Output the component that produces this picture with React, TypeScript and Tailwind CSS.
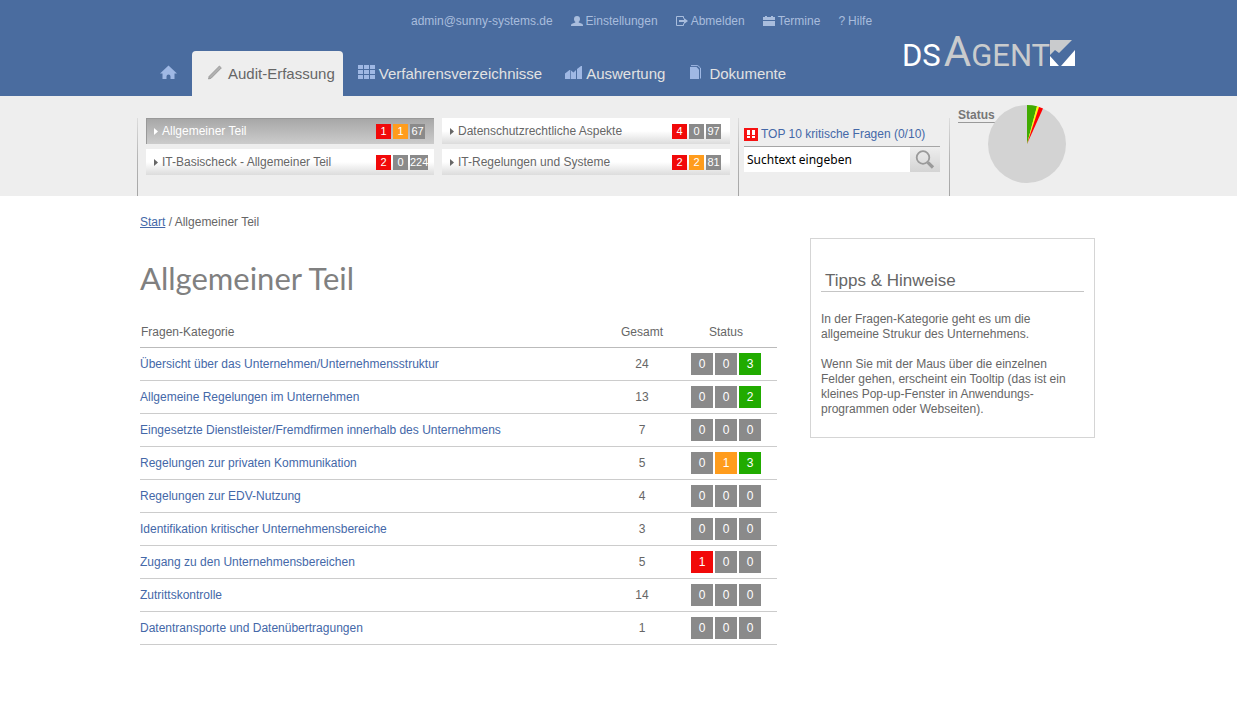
import type { ReactNode } from "react";

type Tone = "red" | "orange" | "green" | "gray";

const TONES: Record<Tone, string> = {
  red: "bg-[#f10909]",
  orange: "bg-[#ff9c1c]",
  green: "bg-[#21ab00]",
  gray: "bg-[#8a8a8a]",
};

/** Status columns run critical, warning, ok. A zero is always gray. */
const ORDER: Tone[] = ["red", "orange", "green"];

interface Section {
  label: string;
  counts: number[];
  active?: boolean;
}

const SECTIONS: Section[] = [
  { label: "Allgemeiner Teil", counts: [1, 1, 67], active: true },
  { label: "Datenschutzrechtliche Aspekte", counts: [4, 0, 97] },
  { label: "IT-Basischeck - Allgemeiner Teil", counts: [2, 0, 224] },
  { label: "IT-Regelungen und Systeme", counts: [2, 2, 81] },
];

const ROWS: { label: string; total: number; counts: number[] }[] = [
  { label: "Übersicht über das Unternehmen/Unternehmensstruktur", total: 24, counts: [0, 0, 3] },
  { label: "Allgemeine Regelungen im Unternehmen", total: 13, counts: [0, 0, 2] },
  { label: "Eingesetzte Dienstleister/Fremdfirmen innerhalb des Unternehmens", total: 7, counts: [0, 0, 0] },
  { label: "Regelungen zur privaten Kommunikation", total: 5, counts: [0, 1, 3] },
  { label: "Regelungen zur EDV-Nutzung", total: 4, counts: [0, 0, 0] },
  { label: "Identifikation kritischer Unternehmensbereiche", total: 3, counts: [0, 0, 0] },
  { label: "Zugang zu den Unternehmensbereichen", total: 5, counts: [1, 0, 0] },
  { label: "Zutrittskontrolle", total: 14, counts: [0, 0, 0] },
  { label: "Datentransporte und Datenübertragungen", total: 1, counts: [0, 0, 0] },
];

function UserIcon() {
  return (
    <svg width="12" height="12" viewBox="0 0 12 12" fill="currentColor" aria-hidden>
      <path d="M6 1c2 0 3 1.200 3 2.900 0 1.300-.6 2.300-1.300 2.900v.7L11 8.800c.6.3 1 .9 1 2.200H0c0-1.300.4-1.900 1-2.200l3.300-1.300v-.7C3.600 6.200 3 5.200 3 3.900 3 2.200 4 1 6 1z" />
    </svg>
  );
}

function LogoutIcon() {
  return (
    <svg width="12" height="12" viewBox="0 0 12 12" fill="none" aria-hidden>
      <path d="M7.500 3.500V1.500H.5v9h7V8.500" stroke="currentColor" />
      <path d="M3 5h5V3l4 3-4 3V7H3z" fill="currentColor" />
    </svg>
  );
}

function CalendarIcon() {
  return (
    <svg width="12" height="12" viewBox="0 0 12 12" fill="currentColor" aria-hidden>
      <path d="M0 2h2V1h2v1h4V1h2v1h2v3H0zM0 6h12v5H0z" />
    </svg>
  );
}

function HomeIcon() {
  return (
    <svg width="17" height="15" viewBox="0 0 17 15" fill="currentColor" aria-hidden>
      <path d="M8.500 0.500L17 8.500H14.500V14H10.500V11.500a2 2 0 0 0-4 0V14H2.500V8.500H0z" />
    </svg>
  );
}

function PencilIcon() {
  return (
    <svg width="17" height="15" viewBox="0 0 17 15" aria-hidden>
      <path d="M1.500 14l.7-2.700L12.400 1l2 1.900L4.200 13.200z" fill="#b0b0b0" stroke="#8d8d8d" strokeWidth="0.7" />
    </svg>
  );
}

function GridIcon() {
  return (
    <svg width="17" height="14" viewBox="0 0 17 14" fill="currentColor" aria-hidden>
      <path d="M0 0h5v4H0zM6 0h5v4H6zM12 0h5v4h-5zM0 5h5v4H0zM6 5h5v4H6zM12 5h5v4h-5zM0 10h5v4H0zM6 10h5v4H6zM12 10h5v4h-5z" />
    </svg>
  );
}

function ChartIcon() {
  return (
    <svg width="17" height="14" viewBox="0 0 17 14" fill="currentColor" aria-hidden>
      <path d="M0 8.500L4.500 5H5.300V14H0zM6 5.500L8.500 7.500 11 5V14H6zM12 4L16 1h1v13H12z" />
    </svg>
  );
}

function DocsIcon() {
  return (
    <svg width="17" height="14" viewBox="0 0 17 14" aria-hidden>
      <path d="M2 2h6.500L11 4.500V14H2z" fill="currentColor" />
      <path d="M3 .6h6.800L12.500 3v10.500" fill="none" stroke="currentColor" strokeWidth="1" />
    </svg>
  );
}

function CriticalIcon() {
  return (
    <svg width="14" height="13" viewBox="0 0 14 13" aria-hidden>
      <path d="M0 0h14v13H0z" fill="#f61111" />
      <path d="M3 2h3v5H3zM8 2h3v5H8zM3 8h3v2H3zM8 8h3v2H8z" fill="#fff" />
    </svg>
  );
}

function SearchIcon() {
  return (
    <svg width="20" height="20" viewBox="0 0 20 20" fill="none" stroke="#9a9a9a" aria-hidden>
      <circle cx="8" cy="7.500" r="6.300" strokeWidth="1.800" />
      <path d="M12.800 12.300L18 17.500" strokeWidth="3.200" />
    </svg>
  );
}

function Caret() {
  return (
    <svg width="4" height="7" viewBox="0 0 4 7" fill="currentColor" aria-hidden>
      <path d="M0 0L4 3.500 0 7z" />
    </svg>
  );
}

function Logo() {
  return (
    <a
      href="#"
      aria-label="DS Agent"
      className="flex items-baseline font-['Roboto','Liberation_Sans',sans-serif] text-[31px] leading-10"
    >
      <span className="text-white">DS</span>
      <span className="ml-[3px] text-[#c9cbcd]">
        <span className="text-[42px] leading-10">A</span>GENT
      </span>
      <svg width="25" height="26" viewBox="0 0 25 26" aria-hidden>
        <path d="M0 0h22L9 13 5 10 0 15z" fill="#c9cbcd" />
        <path d="M0 16l9 10H0zM25 10v16H11z" fill="#fff" />
      </svg>
    </a>
  );
}

function StatusPie() {
  return (
    <svg width="78" height="78" viewBox="0 0 78 78" role="img" aria-label="Status">
      <circle cx="39" cy="39" r="39" fill="#d3d3d3" />
      <path d="M39 39V0A39 39 0 0 1 49 1.300z" fill="#41ab00" />
      <path d="M39 39L49 1.300A39 39 0 0 1 51 1.900z" fill="#ffff00" />
      <path d="M39 39L51 1.900A39 39 0 0 1 55 3.400z" fill="#ff0000" />
    </svg>
  );
}

function TopLink({ icon, children }: { icon?: ReactNode; children: ReactNode }) {
  return (
    <a href="#" className="flex items-center gap-[3px]">
      {icon}
      {children}
    </a>
  );
}

function NavItem({ icon, active, children }: { icon: ReactNode; active?: boolean; children: ReactNode }) {
  return (
    <a
      href="#"
      className={`flex items-center gap-1 pr-2 pl-[15px] ${
        active ? "rounded-t-[4px] bg-[#eeeeee] text-[#666666]" : "text-[#e2e2e2]"
      }`}
    >
      <span className="pb-[3px] text-[#9fb8e4]">{icon}</span>
      {children}
    </a>
  );
}

function Divider() {
  return <div className="w-px shrink-0 bg-linear-to-b from-[#dddddd] via-[#b5b5b5] to-[#a5a5a5]" />;
}

function SectionLink({ label, counts, active }: Section) {
  return (
    <a
      href="#"
      className={`flex h-[26px] items-center bg-linear-to-b pl-2 ${
        active
          ? "from-[#a6a6a6] to-[#cccccc] text-white shadow-[inset_1px_1px_0_#999999]"
          : "from-white from-50% to-[#dcdcdc] text-[#666666]"
      }`}
    >
      <Caret />
      <span className="flex-1 pl-1">{label}</span>
      <span className="flex w-[58px] gap-[2px] text-[11px] leading-[15px] text-white">
        {counts.map((n, i) => (
          <span key={i} className={`min-w-[15px] text-center ${TONES[n && i < 2 ? ORDER[i] : "gray"]}`}>
            {n}
          </span>
        ))}
      </span>
    </a>
  );
}

export default function App() {
  return (
    <div className="min-h-screen bg-white font-['Liberation_Sans',Arial,sans-serif] text-xs text-[#666666]">
      <header className="bg-[#4a6c9f]">
        <div className="mx-auto flex max-w-[963px]">
          <div className="w-[765px]">
            <div className="flex h-[51px] items-start gap-[18px] pt-[13px] pl-[274px] text-[#a9bddd]">
              <TopLink>admin@sunny-systems.de</TopLink>
              <TopLink icon={<UserIcon />}>Einstellungen</TopLink>
              <TopLink icon={<LogoutIcon />}>Abmelden</TopLink>
              <TopLink icon={<CalendarIcon />}>Termine</TopLink>
              <TopLink icon={<span aria-hidden>?</span>}>Hilfe</TopLink>
            </div>
            <nav className="flex h-[45px] pl-2 text-[15px]">
              <a href="#" aria-label="Startseite" className="flex items-center px-[15px] pb-[3px] text-[#9fb8e4]">
                <HomeIcon />
              </a>
              <NavItem icon={<PencilIcon />} active>
                Audit-Erfassung
              </NavItem>
              <NavItem icon={<GridIcon />}>Verfahrensverzeichnisse</NavItem>
              <NavItem icon={<ChartIcon />}>Auswertung</NavItem>
              <NavItem icon={<DocsIcon />}>Dokumente</NavItem>
            </nav>
          </div>
          <div className="pt-8">
            <Logo />
          </div>
        </div>
      </header>

      <div className="bg-[#eeeeee]">
        <div className="mx-auto flex h-[100px] max-w-[963px] pt-[22px]">
          <Divider />
          <div className="grid w-[600px] grid-cols-2 content-start gap-x-2 gap-y-[5px] px-2">
            {SECTIONS.map((s) => (
              <SectionLink key={s.label} {...s} />
            ))}
          </div>
          <Divider />
          <div className="w-[210px] pt-2 pr-[9px] pl-[5px]">
            <a href="#" className="flex items-center gap-[3px] pb-1 text-[#4468a8]">
              <CriticalIcon />
              TOP 10 kritische Fragen (0/10)
            </a>
            <form className="flex h-[26px] border-t border-[#a5a5a5]">
              <input
                type="text"
                aria-label="Suchtext"
                defaultValue="Suchtext eingeben"
                className="min-w-0 flex-1 bg-white px-[3px] font-['Noto_Sans',sans-serif] text-black outline-none"
              />
              <button
                type="button"
                aria-label="Suchen"
                className="flex w-[30px] items-center justify-center bg-linear-to-b from-[#eeeeee] to-[#d4d4d4]"
              >
                <SearchIcon />
              </button>
            </form>
          </div>
          <Divider />
          <div className="-mt-[13px] flex items-start pl-2">
            <a href="#" className="mt-1 -mr-[7px] border-b border-[#999999] leading-[13px] font-bold text-[#777777]">
              Status
            </a>
            <StatusPie />
          </div>
        </div>
      </div>

      <div className="mx-auto flex max-w-[963px] items-start gap-[33px] pr-[5px] pl-[3px]">
        <main className="flex-1 pt-[18px]">
          <div>
            <a href="#" className="text-[#4468a8] underline">
              Start
            </a>{" "}
            / Allgemeiner Teil
          </div>
          <h1 className="mt-7 font-['Lato',sans-serif] text-[31px] leading-10 text-[#808080]">Allgemeiner Teil</h1>
          <table className="mt-4 w-full table-fixed border-collapse">
            <thead>
              <tr className="h-[33px] border-b border-[#bbbbbb]">
                <th className="pt-[3px] pl-px text-left font-normal">Fragen-Kategorie</th>
                <th className="w-[66px] pt-[3px] font-normal">Gesamt</th>
                <th className="w-[102px] pt-[3px] font-normal">Status</th>
              </tr>
            </thead>
            <tbody>
              {ROWS.map((r) => (
                <tr key={r.label} className="h-[33px] border-b border-[#cccccc]">
                  <td>
                    <a href="#" className="text-[#4468a8]">
                      {r.label}
                    </a>
                  </td>
                  <td className="text-center">{r.total}</td>
                  <td>
                    <div className="flex justify-center gap-[2px] text-white">
                      {r.counts.map((n, i) => (
                        <span key={i} className={`w-[22px] text-center leading-[22px] ${TONES[n ? ORDER[i] : "gray"]}`}>
                          {n}
                        </span>
                      ))}
                    </div>
                  </td>
                </tr>
              ))}
            </tbody>
          </table>
        </main>

        <aside className="mt-[42px] w-[285px] border border-[#d5d5d5] px-[10px] pt-8 pb-5">
          <h2 className="border-b border-[#c5c5c5] pl-1 text-[17px] leading-5">Tipps &amp; Hinweise</h2>
          <p className="mt-5 leading-[15px]">
            In der Fragen-Kategorie geht es um die allgemeine Strukur des Unternehmens.
          </p>
          <p className="mt-[15px] leading-[15px]">
            Wenn Sie mit der Maus über die einzelnen Felder gehen, erscheint ein Tooltip (das ist ein kleines
            Pop-up-Fenster in Anwendungs-programmen oder Webseiten).
          </p>
        </aside>
      </div>
    </div>
  );
}
